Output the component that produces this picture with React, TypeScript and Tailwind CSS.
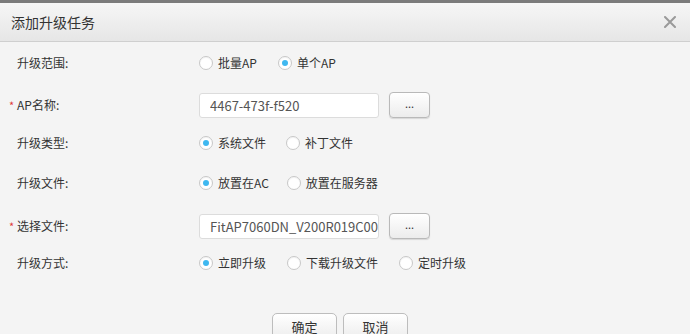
import React, { useState } from 'react';

const font = { fontFamily: '"Noto Sans CJK SC", "Noto Sans", sans-serif' };

const Radio: React.FC<{ checked: boolean; label: string; onClick: () => void; className?: string }> = ({
  checked,
  label,
  onClick,
  className = '',
}) => (
  <button type="button" onClick={onClick} className={`flex items-center gap-[5px] text-[12px] text-[#333] ${className}`}>
    <span className="w-[14px] h-[14px] rounded-full border border-[#c8c8c8] bg-white flex items-center justify-center shadow-[inset_0_1px_1px_rgba(0,0,0,0.05)]">
      {checked && <span className="w-[6px] h-[6px] rounded-full bg-[#3fb8f0]"></span>}
    </span>
    <span>{label}</span>
  </button>
);

const Row: React.FC<{ label: string; required?: boolean; h: string; children: React.ReactNode }> = ({
  label,
  required,
  h,
  children,
}) => (
  <div className={`flex items-center shrink-0 ${h}`}>
    <div className="w-[199px] flex items-center text-[12px] text-[#333] pl-[9px]">
      <span className="w-[8px] text-[#e03a3a] text-[11px]">{required ? '*' : ''}</span>
      <span>{label}</span>
    </div>
    <div className="flex items-center">{children}</div>
  </div>
);

const TextBox: React.FC<{ value: string }> = ({ value }) => (
  <div className="flex items-center gap-[10px]">
    <input
      readOnly
      value={value}
      className="w-[180px] h-[25px] bg-white border border-[#dcdcdc] rounded-[3px] pl-[10px] text-[13px] text-[#555] outline-none"
      style={font}
    />
    <button className="w-[41px] h-[26px] rounded-[4px] border border-[#b9b9b9] bg-gradient-to-b from-white to-[#ececec] shadow-[0_1px_1px_rgba(0,0,0,0.12)] text-[11px] text-[#333] leading-none pb-[4px]">
      ...
    </button>
  </div>
);

export default function App() {
  const [scope, setScope] = useState('single');
  const [type, setType] = useState('sys');
  const [place, setPlace] = useState('ac');
  const [mode, setMode] = useState('now');

  return (
    <div className="w-[690px] h-[334px] bg-[#f4f4f4] overflow-hidden flex flex-col" style={font}>
      <div className="h-[3px] shrink-0 bg-[#7b7b7b]"></div>
      <div className="h-[39px] shrink-0 flex items-center justify-between pl-[11px] pr-[14px] bg-gradient-to-b from-[#f6f6f6] to-[#e6e6e6] border-b border-[#cfcfcf]">
        <span className="text-[14px] text-[#333]">添加升级任务</span>
        <svg width="12" height="12" viewBox="0 0 12 12">
          <path d="M1 1 L11 11 M11 1 L1 11" stroke="#9a9a9a" strokeWidth="2" strokeLinecap="round" />
        </svg>
      </div>

      <div className="flex flex-col shrink-0">
        <Row label="升级范围:" h="h-[42px]">
          <Radio checked={scope === 'batch'} label="批量AP" onClick={() => setScope('batch')} />
          <Radio checked={scope === 'single'} label="单个AP" onClick={() => setScope('single')} className="ml-[21px]" />
        </Row>
        <Row label="AP名称:" required h="h-[42px]">
          <TextBox value="4467-473f-f520" />
        </Row>
        <Row label="升级类型:" h="h-[34px]">
          <Radio checked={type === 'sys'} label="系统文件" onClick={() => setType('sys')} />
          <Radio checked={type === 'patch'} label="补丁文件" onClick={() => setType('patch')} className="ml-[20px]" />
        </Row>
        <Row label="升级文件:" h="h-[46px]">
          <Radio checked={place === 'ac'} label="放置在AC" onClick={() => setPlace('ac')} />
          <Radio checked={place === 'server'} label="放置在服务器" onClick={() => setPlace('server')} className="ml-[18px]" />
        </Row>
        <Row label="选择文件:" required h="h-[40px]">
          <TextBox value="FitAP7060DN_V200R019C00SPC800.bin" />
        </Row>
        <Row label="升级方式:" h="h-[34px]">
          <Radio checked={mode === 'now'} label="立即升级" onClick={() => setMode('now')} />
          <Radio checked={mode === 'download'} label="下载升级文件" onClick={() => setMode('download')} className="ml-[21px]" />
          <Radio checked={mode === 'timer'} label="定时升级" onClick={() => setMode('timer')} className="ml-[21px]" />
        </Row>
      </div>

      <div className="flex shrink-0 justify-center gap-[6px] mt-[33px] pr-[10px]">
        <button className="w-[65px] h-[28px] rounded-[5px] border border-[#bdbdbd] bg-gradient-to-b from-white to-[#ececec] text-[13px] text-[#333]">
          确定
        </button>
        <button className="w-[65px] h-[28px] rounded-[5px] border border-[#bdbdbd] bg-gradient-to-b from-white to-[#ececec] text-[13px] text-[#333]">
          取消
        </button>
      </div>
    </div>
  );
}
